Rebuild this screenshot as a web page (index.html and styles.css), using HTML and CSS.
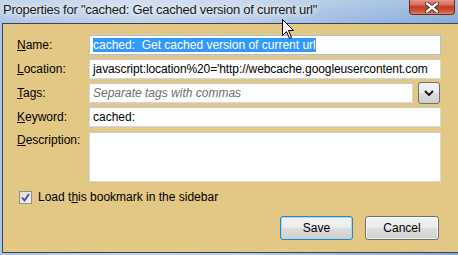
FILE: index.html
```html
<!DOCTYPE html>
<html lang="en">
<head>
  <meta charset="UTF-8" />
  <title>Properties</title>
  <link rel="stylesheet" href="styles.css">
</head>
<body>
  <div class="window">
    <div class="titlebar">
      <span class="title">Properties for "cached: Get cached version of current url"</span>
      <div class="close">
        <svg width="16" height="11" viewBox="0 0 16 11">
          <path d="M3 1.5 L13 9.5 M13 1.5 L3 9.5" stroke="#3a2a2a" stroke-width="4.2" stroke-linecap="round" />
          <path d="M3 1.5 L13 9.5 M13 1.5 L3 9.5" stroke="#fff" stroke-width="2.4" stroke-linecap="round" />
        </svg>
      </div>
    </div>

    <div class="client">
      <div class="fields">
        <div class="lbl"><u>N</u>ame:</div>
        <div class="textbox focused"><span class="sel">cached:&nbsp; Get cached version of current url</span></div>

        <div class="lbl"><u>L</u>ocation:</div>
        <div class="textbox url">javascript:location%20='http://webcache.googleusercontent.com</div>

        <div class="lbl"><u>T</u>ags:</div>
        <div class="tagrow">
          <div class="textbox placeholder">Separate tags with commas</div>
          <div class="dropbtn">
            <svg width="10" height="6" viewBox="0 0 10 6">
              <path d="M1 1 L5 5 L9 1" fill="none" stroke="#1c1c1c" stroke-width="2" />
            </svg>
          </div>
        </div>

        <div class="lbl"><u>K</u>eyword:</div>
        <div class="textbox">cached:</div>

        <div class="lbl top"><u>D</u>escription:</div>
        <div class="textbox desc"></div>
      </div>

      <div class="check">
        <span class="box">
          <svg width="9" height="9" viewBox="0 0 9 9">
            <path d="M1 4.5 L3.5 7.5 L8 1" fill="none" stroke="#3c4f86" stroke-width="1.8" />
          </svg>
        </span>
        <span>Load t<u>h</u>is bookmark in the sidebar</span>
      </div>

      <div class="buttons">
        <div class="btn default">Save</div>
        <div class="btn">Cancel</div>
      </div>
    </div>

    <!-- mouse pointer -->
    <svg class="cursor" width="13" height="21" viewBox="0 0 13 21">
      <path d="M0.5 0.5 L0.5 16.5 L4.5 12.5 L7.5 19.5 L9.5 18.5 L6.5 11.5 L11.5 11.5 Z" fill="#fff" stroke="#000" stroke-width="1" />
    </svg>
  </div>
</body>
</html>
```

FILE: styles.css
```css
body {
  margin: 0;
  font-family: "Liberation Sans", Arial, sans-serif;
  font-size: 12px;
  color: #000;
}

.window {
  position: relative;
  width: 458px;
  height: 255px;
  overflow: hidden;
  display: flex;
  flex-direction: column;
  background: linear-gradient(90deg, #adc5e4 0%, #c0d3eb 30%, #b6cce8 55%, #9dbbe1 75%, #86aada 100%);
}

.titlebar {
  height: 23px;
  display: flex;
  align-items: flex-start;
  padding-left: 3px;
  background: linear-gradient(180deg, rgba(255, 255, 255, 0.25) 0%, rgba(255, 255, 255, 0) 100%);
}

.title {
  font-size: 13px;
  letter-spacing: -0.25px;
  line-height: 20px;
  color: #1a1a1a;
  white-space: nowrap;
  text-shadow: 0 0 6px #fff, 0 0 10px rgba(255, 255, 255, 0.9);
}

.close {
  margin-left: auto;
  margin-right: 3px;
  margin-top: -2px;
  width: 46px;
  height: 17px;
  box-sizing: border-box;
  border: 1px solid #6e2a21;
  border-top: none;
  border-radius: 0 0 4px 4px;
  background: linear-gradient(180deg, #e9a99a 0%, #d8735f 40%, #c13b23 55%, #cf5a40 85%, #e08a6e 100%);
  display: flex;
  align-items: center;
  justify-content: center;
  padding-top: 2px;
}

.client {
  flex: 1;
  margin-left: 2px;
  margin-bottom: 2px;
  border: 1px solid #34465e;
  border-right: none;
  background: #e3c784;
  padding: 11px 0 0 14px;
}

.fields {
  display: grid;
  grid-template-columns: 72px 352px;
  row-gap: 4px;
  align-items: center;
}

.lbl {
  line-height: 20px;
  white-space: nowrap;
}

.lbl.top {
  align-self: start;
  line-height: 14px;
  padding-top: 1px;
  margin-top: 1px;
}

.textbox {
  height: 20px;
  box-sizing: border-box;
  border: 1px solid #d5d9de;
  border-top-color: #c8ccd2;
  background: #fff;
  padding: 0 3px;
  line-height: 18px;
  white-space: nowrap;
  overflow: hidden;
}

.textbox.focused {
  border-color: #a6c2df;
}

.url {
  letter-spacing: -0.1px;
}

.sel {
  background: #3399ff;
  color: #fff;
}

.placeholder {
  color: #6d6d6d;
  font-style: italic;
  flex: 1;
}

.tagrow {
  display: flex;
  gap: 5px;
  align-items: center;
}

.dropbtn {
  width: 22px;
  height: 22px;
  margin: -1px 1px -1px 0;
  box-sizing: border-box;
  border: 1px solid #707070;
  border-radius: 3px;
  background: linear-gradient(180deg, #f2f2f2 0%, #ebebeb 50%, #dddddd 50%, #cfcfcf 100%);
  display: flex;
  align-items: center;
  justify-content: center;
}

.desc {
  height: 50px;
  margin-top: 1px;
}

.check {
  display: flex;
  align-items: center;
  gap: 6px;
  margin-top: 8px;
  padding-left: 2px;
  line-height: 14px;
}

.box {
  width: 13px;
  height: 13px;
  box-sizing: border-box;
  border: 1px solid #8e8f8f;
  background: linear-gradient(135deg, #dcdcdc 0%, #f4f4f4 100%);
  display: flex;
  align-items: center;
  justify-content: center;
}

.buttons {
  display: flex;
  justify-content: flex-end;
  gap: 12px;
  margin-top: 12px;
  padding-right: 19px;
}

.btn {
  width: 74px;
  height: 24px;
  box-sizing: border-box;
  border: 1px solid #707070;
  border-radius: 3px;
  background: linear-gradient(180deg, #f2f2f2 0%, #ebebeb 50%, #dddddd 50%, #cfcfcf 100%);
  box-shadow: inset 0 0 0 1px rgba(255, 255, 255, 0.7);
  text-align: center;
  line-height: 22px;
}

.btn.default {
  width: 73px;
  border-color: #3c7fb1;
  box-shadow: inset 0 0 0 1px #9fdcf5;
}

.cursor {
  position: absolute;
  left: 282px;
  top: 19px;
}
```
